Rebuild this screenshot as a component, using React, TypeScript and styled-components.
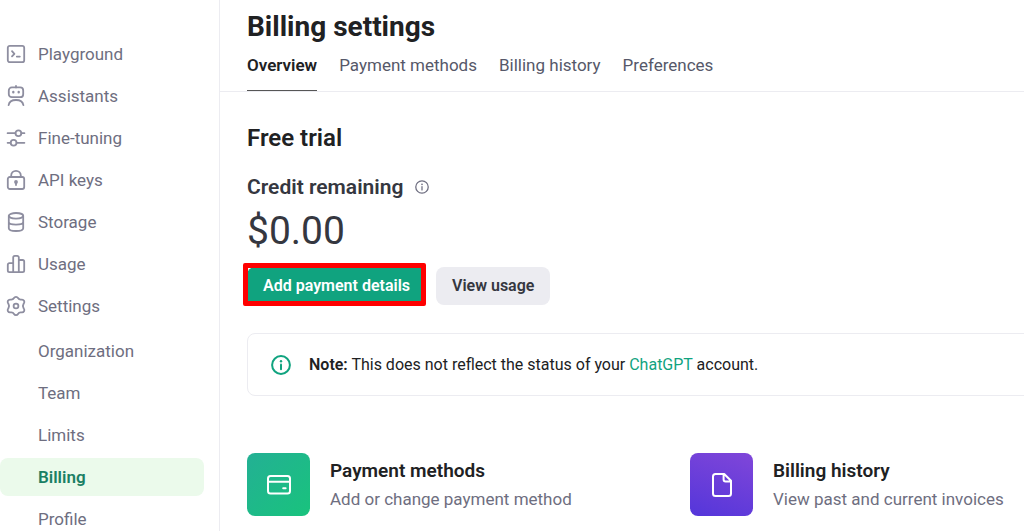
import React from "react";
import styled, { createGlobalStyle } from "styled-components";

const GlobalStyle = createGlobalStyle`
  *, *::before, *::after { box-sizing: border-box; }
  html, body { margin: 0; background: #fff; overflow: hidden; }
  body {
    font-family: Roboto, "Liberation Sans", Arial, sans-serif;
    font-size: 17px;
    line-height: 24px;
    color: #202123;
  }
  h1, h2, h3, p, ul { margin: 0; padding: 0; }
  ul { list-style: none; }
`;

const Page = styled.div`
  display: flex;
  height: 100vh;
  overflow: hidden;
`;

const Sidebar = styled.nav`
  flex: 0 0 220px;
  padding: 35px 15px 0 0;
  border-right: 1px solid #ececf1;
`;

const NavList = styled.ul<{ $nested?: boolean }>`
  display: flex;
  flex-direction: column;
  gap: 4px;
  margin-top: ${(p) => (p.$nested ? "7px" : "0")};
`;

const NavLink = styled.a<{ $active?: boolean; $nested?: boolean }>`
  display: flex;
  align-items: center;
  gap: 12px;
  height: 38px;
  padding-left: ${(p) => (p.$nested ? "38px" : "6px")};
  border-radius: 8px;
  text-decoration: none;
  color: ${(p) => (p.$active ? "#1a7f64" : "#6e6e80")};
  background: ${(p) => (p.$active ? "#ebfaeb" : "transparent")};
  font-weight: ${(p) => (p.$active ? 600 : 400)};
`;

const NavIcon = styled.svg`
  flex: none;
  width: 20px;
  height: 20px;
  fill: none;
  stroke: #8e8ea0;
  stroke-width: 1.8;
  stroke-linecap: round;
  stroke-linejoin: round;
`;

const Main = styled.main`
  flex: 1;
  min-width: 0;
  overflow: hidden;
`;

const Header = styled.header`
  padding: 9px 27px 0;
  border-bottom: 1px solid #ececf1;
`;

const Title = styled.h1`
  font-size: 28px;
  line-height: 36px;
  font-weight: 700;
`;

const Tabs = styled.div`
  display: flex;
  gap: 22px;
  margin-top: 7px;
`;

const Tab = styled.a<{ $active?: boolean }>`
  height: 39px;
  line-height: 26px;
  text-decoration: none;
  white-space: nowrap;
  color: ${(p) => (p.$active ? "#202123" : "#565869")};
  font-weight: ${(p) => (p.$active ? 600 : 400)};
  border-bottom: 1px solid ${(p) => (p.$active ? "#565656" : "transparent")};
`;

const Content = styled.div`
  min-width: 889px;
  padding: 30px 0 0 27px;
`;

const SectionTitle = styled.h2`
  font-size: 24px;
  line-height: 32px;
  font-weight: 600;
`;

const CreditLabel = styled.h3`
  display: flex;
  align-items: center;
  gap: 12px;
  margin-top: 18px;
  font-size: 21px;
  line-height: 30px;
  font-weight: 600;
  color: #353740;
`;

const Amount = styled.p`
  margin-top: 4px;
  font-size: 39px;
  line-height: 50px;
  color: #353740;
`;

const Actions = styled.div`
  display: flex;
  gap: 10px;
  margin-top: 11px;
`;

const Highlight = styled.div`
  position: relative;
  &::after {
    content: "";
    position: absolute;
    inset: -4px 0 -1px -4px;
    border: 5px solid #fe0000;
    border-radius: 2px;
    pointer-events: none;
  }
`;

const Button = styled.button<{ $primary?: boolean }>`
  height: 38px;
  padding: 0 16px;
  border: 0;
  border-radius: 8px;
  font: inherit;
  font-size: 16px;
  font-weight: 600;
  white-space: nowrap;
  color: ${(p) => (p.$primary ? "#fff" : "#353740")};
  background: ${(p) => (p.$primary ? "#10a37f" : "#ececf1")};
`;

const Note = styled.div`
  display: flex;
  align-items: center;
  gap: 18px;
  margin-top: 28px;
  padding: 19px 23px 18px;
  border: 1px solid #ececf1;
  border-radius: 8px;
  font-size: 16px;

  a {
    color: #10a37f;
    text-decoration: none;
  }
  strong {
    font-weight: 600;
  }
`;

const InfoIcon = styled.svg<{ $size: number }>`
  flex: none;
  width: ${(p) => p.$size}px;
  height: ${(p) => p.$size}px;
  fill: none;
  stroke: currentColor;
  stroke-linecap: round;
  color: ${(p) => (p.$size > 16 ? "#10a37f" : "#6e6e80")};
`;

const Cards = styled.div`
  display: grid;
  grid-template-columns: 1fr 1fr;
  column-gap: 24px;
  margin-top: 57px;
`;

const Card = styled.a`
  display: flex;
  align-items: center;
  gap: 20px;
  text-decoration: none;
  color: inherit;
`;

const Tile = styled.span<{ $background: string }>`
  display: flex;
  flex: none;
  align-items: center;
  justify-content: center;
  width: 63px;
  height: 63px;
  border-radius: 8px;
  background: ${(p) => p.$background};

  svg {
    width: 26px;
    height: 26px;
    fill: none;
    stroke: #fff;
    stroke-width: 2;
    stroke-linejoin: round;
    stroke-linecap: round;
  }
`;

const CardTitle = styled.h3`
  font-size: 19px;
  line-height: 28px;
  font-weight: 600;
`;

const CardText = styled.p`
  line-height: 28px;
  color: #6e6e80;
`;

const mainItems: { label: string; icon: React.ReactNode }[] = [
  {
    label: "Playground",
    icon: (
      <>
        <rect x="1.8" y="1.8" width="16.4" height="16.4" rx="2" />
        <path d="M6 7.2 8.4 9.8 6 12.4M10.8 12.6h3" />
      </>
    ),
  },
  {
    label: "Assistants",
    icon: (
      <>
        <rect x="2.8" y="1.4" width="14.4" height="9.8" rx="3" />
        <path d="M10 0v1.4M2.6 19.2c.6-3.4 3.4-5.2 7.4-5.2s6.8 1.8 7.4 5.2" />
        <path d="M7.3 6v.3M12.7 6v.3" strokeWidth="2.4" />
      </>
    ),
  },
  {
    label: "Fine-tuning",
    icon: (
      <>
        <path d="M1.6 5.2h7.8M15.4 5.2h3M1.6 14.8h3M10.6 14.8h7.8" />
        <circle cx="12.4" cy="5.2" r="2.9" />
        <circle cx="7.6" cy="14.8" r="2.9" />
      </>
    ),
  },
  {
    label: "API keys",
    icon: (
      <>
        <rect x="1.8" y="7" width="16.4" height="12" rx="2" />
        <path d="M5.2 7V5.6a4.8 4.8 0 0 1 9.6 0V7M10 12.4v2.6" />
        <circle cx="10" cy="12" r="1" fill="#8e8ea0" />
      </>
    ),
  },
  {
    label: "Storage",
    icon: (
      <>
        <ellipse cx="10" cy="3.8" rx="7.2" ry="2.8" />
        <path d="M2.8 3.8v12.4c0 1.6 3.2 2.8 7.2 2.8s7.2-1.2 7.2-2.8V3.8M2.8 10c0 1.6 3.2 2.6 7.2 2.6s7.2-1 7.2-2.6" />
      </>
    ),
  },
  {
    label: "Usage",
    icon: (
      <path d="M7.2 18.2V3.4a1.6 1.6 0 0 1 1.6-1.6h2.4a1.6 1.6 0 0 1 1.6 1.6v14.8M7.2 9.2H3.4a1.6 1.6 0 0 0-1.6 1.6v5.8a1.6 1.6 0 0 0 1.6 1.6h13.2a1.6 1.6 0 0 0 1.6-1.6V7.6A1.6 1.6 0 0 0 16.6 6h-3.8" />
    ),
  },
  {
    label: "Settings",
    icon: (
      <>
        <path d="M8 2a2.300 2.300 0 0 1 4 0c.6 1.100 1.500 1.600 2.700 1.600h1.300a2.300 2.300 0 0 1 2 3.500l-.5.900c-.7 1.200-.7 2.800 0 4l.5.900a2.300 2.300 0 0 1-2 3.500h-1.300c-1.200 0-2.100.5-2.700 1.600a2.300 2.300 0 0 1-4 0c-.6-1.100-1.500-1.600-2.700-1.600H4a2.300 2.300 0 0 1-2-3.500l.5-.9c.7-1.200.7-2.800 0-4L2 7.100a2.300 2.300 0 0 1 2-3.500h1.300C6.500 3.600 7.400 3.100 8 2Z" />
        <circle cx="10" cy="10" r="2.400" />
      </>
    ),
  },
];

const settingsItems = ["Organization", "Team", "Limits", "Billing", "Profile"];
const tabs = ["Overview", "Payment methods", "Billing history", "Preferences"];

function Info({ size }: { size: number }) {
  return (
    <InfoIcon $size={size} viewBox="0 0 20 20" strokeWidth={size > 16 ? 2 : 1.8} aria-hidden="true">
      <circle cx="10" cy="10" r="8.900" />
      <path d="M10 9.600v4.600" />
      <circle cx="10" cy="6.200" r="1.200" fill="currentColor" stroke="none" />
    </InfoIcon>
  );
}

export default function App() {
  return (
    <Page>
      <GlobalStyle />
      <Sidebar>
        <NavList>
          {mainItems.map((item) => (
            <li key={item.label}>
              <NavLink href="#">
                <NavIcon viewBox="0 0 20 20" overflow="visible" aria-hidden="true">
                  {item.icon}
                </NavIcon>
                {item.label}
              </NavLink>
            </li>
          ))}
        </NavList>
        <NavList $nested>
          {settingsItems.map((label) => (
            <li key={label}>
              <NavLink href="#" $nested $active={label === "Billing"}>
                {label}
              </NavLink>
            </li>
          ))}
        </NavList>
      </Sidebar>
      <Main>
        <Header>
          <Title>Billing settings</Title>
          <Tabs>
            {tabs.map((label, i) => (
              <Tab key={label} href="#" $active={i === 0}>
                {label}
              </Tab>
            ))}
          </Tabs>
        </Header>
        <Content>
          <SectionTitle>Free trial</SectionTitle>
          <CreditLabel>
            Credit remaining
            <Info size={14} />
          </CreditLabel>
          <Amount>$0.00</Amount>
          <Actions>
            <Highlight>
              <Button $primary>Add payment details</Button>
            </Highlight>
            <Button>View usage</Button>
          </Actions>
          <Note>
            <Info size={20} />
            <p>
              <strong>Note:</strong> This does not reflect the status of your <a href="#">ChatGPT</a> account.
            </p>
          </Note>
          <Cards>
            <Card href="#">
              <Tile $background="linear-gradient(135deg, #23b094, #19c37d)">
                <svg viewBox="0 0 26 26" aria-hidden="true">
                  <rect x="2" y="4" width="22" height="17.500" rx="2.500" />
                  <path d="M2 9.800h22M17.200 16.200h2.400" />
                </svg>
              </Tile>
              <div>
                <CardTitle>Payment methods</CardTitle>
                <CardText>Add or change payment method</CardText>
              </div>
            </Card>
            <Card href="#">
              <Tile $background="linear-gradient(200deg, #8046d9, #5436da)">
                <svg viewBox="0 0 26 26" aria-hidden="true">
                  <path d="M15.200 2H6.500A2.500 2.500 0 0 0 4 4.500v17A2.500 2.500 0 0 0 6.500 24h13a2.500 2.500 0 0 0 2.500-2.500V8.800ZM14.600 2v5.400a2 2 0 0 0 2 2H22" />
                </svg>
              </Tile>
              <div>
                <CardTitle>Billing history</CardTitle>
                <CardText>View past and current invoices</CardText>
              </div>
            </Card>
          </Cards>
        </Content>
      </Main>
    </Page>
  );
}
